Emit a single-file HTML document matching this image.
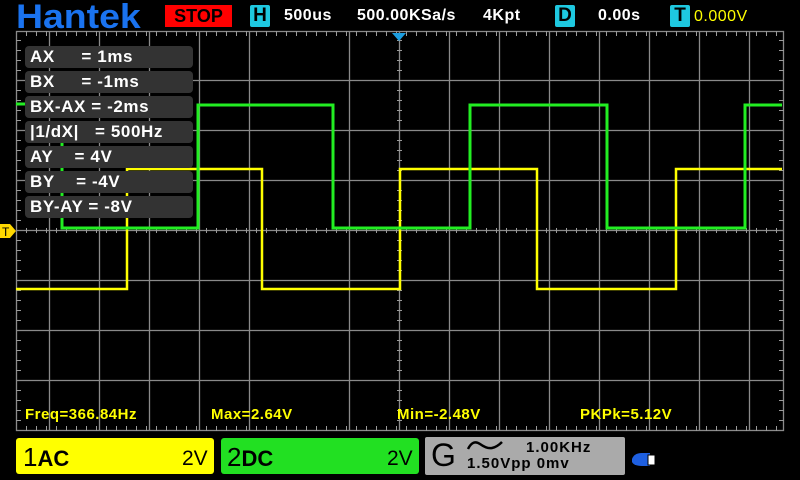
<!DOCTYPE html>
<html><head><meta charset="utf-8"><style>
body{margin:0;width:800px;height:480px;background:#000;overflow:hidden;position:relative;font-family:"Liberation Sans",sans-serif;}
.t{position:absolute;white-space:nowrap;}
.cur{position:absolute;left:25px;width:168px;height:22px;background:#333;border-radius:4px;color:#fff;font-size:17px;font-weight:bold;line-height:22px;padding-left:5px;box-sizing:border-box;letter-spacing:0.6px;}
.m{position:absolute;top:406px;color:#ff0;font-size:15px;font-weight:bold;letter-spacing:0.5px;}
</style></head><body>
<svg width="800" height="480" style="position:absolute;left:0;top:0">
<g stroke="#8a8a8a" stroke-width="1.3" fill="none">
<rect x="16.5" y="31.5" width="767" height="399"/>
<path d="M49.5 31V431M99.5 31V431M149.5 31V431M199.5 31V431M249.5 31V431M349.5 31V431M449.5 31V431M499.5 31V431M549.5 31V431M599.5 31V431M649.5 31V431M699.5 31V431M749.5 31V431"/>
<path d="M16 80.5H784M16 130.5H784M16 180.5H784M16 280.5H784M16 330.5H784M16 380.5H784"/>
<path d="M16 230.5H784M399.5 31V431"/>
</g>
<g stroke="#9a9a9a" stroke-width="1">
<path id="tk" d="M26.5 31v5M36.5 31v5M46.5 31v5M56.5 31v5M66.5 31v5M76.5 31v5M86.5 31v5M96.5 31v5M106.5 31v5M116.5 31v5M126.5 31v5M136.5 31v5M146.5 31v5M156.5 31v5M166.5 31v5M176.5 31v5M186.5 31v5M196.5 31v5M206.5 31v5M216.5 31v5M226.5 31v5M236.5 31v5M246.5 31v5M256.5 31v5M266.5 31v5M276.5 31v5M286.5 31v5M296.5 31v5M306.5 31v5M316.5 31v5M326.5 31v5M336.5 31v5M346.5 31v5M356.5 31v5M366.5 31v5M376.5 31v5M386.5 31v5M396.5 31v5M406.5 31v5M416.5 31v5M426.5 31v5M436.5 31v5M446.5 31v5M456.5 31v5M466.5 31v5M476.5 31v5M486.5 31v5M496.5 31v5M506.5 31v5M516.5 31v5M526.5 31v5M536.5 31v5M546.5 31v5M556.5 31v5M566.5 31v5M576.5 31v5M586.5 31v5M596.5 31v5M606.5 31v5M616.5 31v5M626.5 31v5M636.5 31v5M646.5 31v5M656.5 31v5M666.5 31v5M676.5 31v5M686.5 31v5M696.5 31v5M706.5 31v5M716.5 31v5M726.5 31v5M736.5 31v5M746.5 31v5M756.5 31v5M766.5 31v5M776.5 31v5"/>
<use href="#tk" transform="translate(0,395)"/>
<use href="#tk" transform="translate(0,197)"/>
</g>
<g stroke="#9a9a9a" stroke-width="1">
<path id="vt" d="M16 40.5h5M16 50.5h5M16 60.5h5M16 70.5h5M16 90.5h5M16 100.5h5M16 110.5h5M16 120.5h5M16 140.5h5M16 150.5h5M16 160.5h5M16 170.5h5M16 190.5h5M16 200.5h5M16 210.5h5M16 220.5h5M16 240.5h5M16 250.5h5M16 260.5h5M16 270.5h5M16 290.5h5M16 300.5h5M16 310.5h5M16 320.5h5M16 340.5h5M16 350.5h5M16 360.5h5M16 370.5h5M16 390.5h5M16 400.5h5M16 410.5h5M16 420.5h5"/>
<use href="#vt" transform="translate(763,0)"/>
<use href="#vt" transform="translate(381,0)"/>
</g>
<path d="M16 289H127V169H262V289H400V169H537V289H676V169H782" stroke="#ffff00" stroke-width="2.5" fill="none"/>
<path d="M16 104H26M62 140V228H198V105H333V228H470V105H607V228H745V105H782" stroke="#22ee22" stroke-width="3" fill="none"/>
<path d="M392 33h14l-7 8z" fill="#1c9ee0"/>
<path d="M0 224h10l6 7-6 7H0z" fill="#ffd800"/>
<text x="2" y="236" font-size="12" font-family="Liberation Sans" fill="#000">T</text>
<path d="M632 459q2-6 10-6h8v13h-8q-8 0-10-4z" fill="#1e5fe0"/>
<rect x="648" y="455" width="7" height="10" fill="#fff" stroke="#000" stroke-width="1"/>
</svg>
<div class="t" style="left:16px;top:-3px;font-size:34px;font-weight:bold;color:#1a73f0;transform:scaleX(1.1);transform-origin:0 0;line-height:40px;">Hantek</div>
<div class="t" style="left:165px;top:5px;width:67px;height:22px;background:#f00;color:#000;font-size:18px;font-weight:bold;text-align:center;line-height:22px;">STOP</div>
<div class="t" style="left:250px;top:5px;width:20px;height:22px;background:#1ec8e0;color:#000;font-size:19px;font-weight:bold;text-align:center;line-height:22px;border-radius:2px;">H</div>
<div class="t" style="left:284px;top:7px;color:#fff;font-size:16px;font-weight:bold;letter-spacing:0.5px;">500us</div>
<div class="t" style="left:357px;top:7px;color:#fff;font-size:16px;font-weight:bold;letter-spacing:0.5px;">500.00KSa/s</div>
<div class="t" style="left:483px;top:7px;color:#fff;font-size:16px;font-weight:bold;letter-spacing:0.5px;">4Kpt</div>
<div class="t" style="left:555px;top:5px;width:20px;height:22px;background:#1ec8e0;color:#000;font-size:19px;font-weight:bold;text-align:center;line-height:22px;border-radius:2px;">D</div>
<div class="t" style="left:598px;top:7px;color:#fff;font-size:16px;font-weight:bold;letter-spacing:0.5px;">0.00s</div>
<div class="t" style="left:670px;top:5px;width:20px;height:22px;background:#1ec8e0;color:#000;font-size:19px;font-weight:bold;text-align:center;line-height:22px;border-radius:2px;">T</div>
<div class="t" style="left:694px;top:8px;color:#ff0;font-size:16px;letter-spacing:0.5px;">0.000V</div>
<div class="cur" style="top:46px">AX&nbsp;&nbsp;&nbsp;&nbsp;&nbsp;= 1ms</div>
<div class="cur" style="top:71px">BX&nbsp;&nbsp;&nbsp;&nbsp;&nbsp;= -1ms</div>
<div class="cur" style="top:96px">BX-AX = -2ms</div>
<div class="cur" style="top:121px">|1/dX|&nbsp;&nbsp;&nbsp;= 500Hz</div>
<div class="cur" style="top:146px">AY&nbsp;&nbsp;&nbsp;&nbsp;= 4V</div>
<div class="cur" style="top:171px">BY&nbsp;&nbsp;&nbsp;&nbsp;= -4V</div>
<div class="cur" style="top:196px">BY-AY = -8V</div>
<div class="m" style="left:25px">Freq=366.84Hz</div>
<div class="m" style="left:211px">Max=2.64V</div>
<div class="m" style="left:397px">Min=-2.48V</div>
<div class="m" style="left:580px">PKPk=5.12V</div>
<div class="t" style="left:16px;top:438px;width:198px;height:36px;background:#ff0;border-radius:3px;"></div>
<div class="t" style="left:23px;top:442px;font-size:26px;color:#000;">1<span style="font-size:22px;font-weight:bold">AC</span></div>
<div class="t" style="left:182px;top:447px;font-size:21px;color:#000;">2V</div>
<div class="t" style="left:221px;top:438px;width:198px;height:36px;background:#22e022;border-radius:3px;"></div>
<div class="t" style="left:227px;top:442px;font-size:26px;color:#000;">2<span style="font-size:22px;font-weight:bold">DC</span></div>
<div class="t" style="left:387px;top:447px;font-size:21px;color:#000;">2V</div>
<div class="t" style="left:425px;top:437px;width:200px;height:38px;background:#aaa;border-radius:2px;"></div>
<div class="t" style="left:431px;top:437px;font-size:32px;color:#000;">G</div>
<svg class="t" style="left:466px;top:438px" width="40" height="16"><path d="M2 11q5-10 12-5t12 4 10-6" stroke="#000" stroke-width="2.5" fill="none"/></svg>
<div class="t" style="left:526px;top:439px;font-size:15px;font-weight:bold;color:#000;letter-spacing:1px;">1.00KHz</div>
<div class="t" style="left:467px;top:455px;font-size:15px;font-weight:bold;color:#000;letter-spacing:1px;">1.50Vpp 0mv</div>
</body></html>
